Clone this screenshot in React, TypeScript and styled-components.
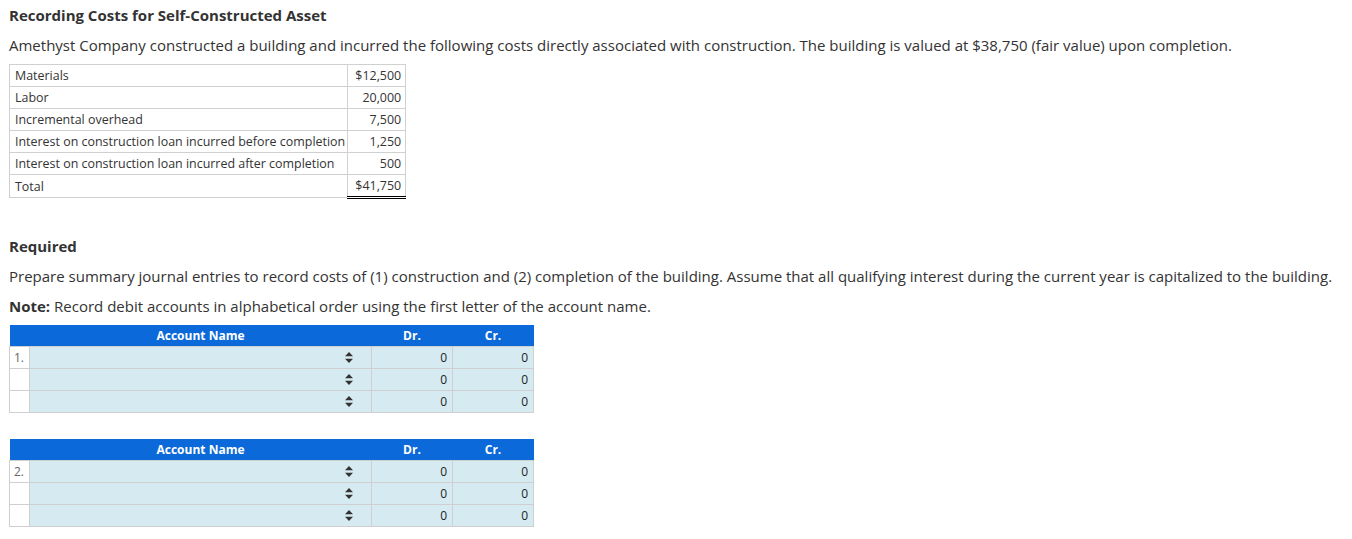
import React from "react";
import styled, { createGlobalStyle } from "styled-components";

const Global = createGlobalStyle`
  html, body { margin: 0; padding: 0; background: #fff; }
  body { font-family: "Open Sans", "Noto Sans", Arial, sans-serif; color: #333; }
`;

const Page = styled.div`
  padding: 5px 9px 0 9px;
`;

const Title = styled.h1`
  margin: 0;
  font-size: 15px;
  line-height: 20px;
  font-weight: 700;
  color: #333;
`;

const Para = styled.p<{ $top?: number }>`
  margin: ${(p) => p.$top ?? 10}px 0 0 0;
  font-size: 15px;
  line-height: 20px;
  color: #333;
`;

const Heading = styled.h2`
  margin: 37px 0 0 0;
  font-size: 15px;
  line-height: 20px;
  font-weight: 700;
  color: #333;
`;

const CostTable = styled.table`
  margin-top: 9px;
  border-collapse: collapse;
  font-size: 12.45px;
  color: #333;
`;

const CostLabel = styled.td`
  border: 1px solid #d0d0d0;
  padding: 0 2px 0 5px;
  height: 21px;
  white-space: nowrap;
`;

const CostValue = styled.td<{ $total?: boolean }>`
  border: 1px solid #d0d0d0;
  padding: 0 4px 0 4px;
  height: 21px;
  text-align: right;
  width: 49px;
  ${(p) =>
    p.$total &&
    `border-top: 1px solid #000; border-bottom: 3px double #000;`}
`;

const Strong = styled.strong`
  font-weight: 700;
`;

const Journal = styled.table<{ $top: number }>`
  margin-top: ${(p) => p.$top}px;
  border-collapse: collapse;
  font-size: 12px;
  width: 525px;
  table-layout: fixed;
`;

const HeadCell = styled.th<{ $w?: number }>`
  background: #0b69d9;
  color: #fff;
  font-weight: 700;
  font-size: 12px;
  height: 21px;
  padding: 0;
  text-align: center;
  ${(p) => (p.$w ? `width: ${p.$w}px;` : "")}
`;

const NumCell = styled.td`
  border: 1px solid #cfcfcf;
  background: #fff;
  color: #666;
  height: 21px;
  padding: 0 0 0 4px;
  font-size: 12px;
`;

const AcctCell = styled.td`
  border: 1px solid #cfcfcf;
  background: #d5eaf1;
  height: 21px;
  padding: 0 18px 0 6px;
`;

const AcctInner = styled.div`
  display: flex;
  justify-content: flex-end;
  align-items: center;
`;

const AmtCell = styled.td`
  border: 1px solid #cfcfcf;
  background: #d5eaf1;
  height: 21px;
  padding: 0 5px;
  text-align: right;
  color: #222;
`;

const Warn = styled.p`
  margin: 8px 0 0 0;
  font-size: 15px;
  line-height: 20px;
  color: #e0302a;
`;

const SortIcon = () => (
  <svg width="8" height="11" viewBox="0 0 8 11">
    <path d="M4 0 L8 4.3 L0 4.3 Z" fill="#333" />
    <path d="M4 11 L8 6.7 L0 6.7 Z" fill="#333" />
  </svg>
);

const costs: [string, string][] = [
  ["Materials", "$12,500"],
  ["Labor", "20,000"],
  ["Incremental overhead", "7,500"],
  ["Interest on construction loan incurred before completion", "1,250"],
  ["Interest on construction loan incurred after completion", "500"],
];

const JournalTable = ({ num, top }: { num: string; top: number }) => (
  <Journal $top={top}>
    <thead>
      <tr>
        <HeadCell $w={20} />
        <HeadCell $w={342}>Account Name</HeadCell>
        <HeadCell $w={81}>Dr.</HeadCell>
        <HeadCell>Cr.</HeadCell>
      </tr>
    </thead>
    <tbody>
      {[0, 1, 2].map((i) => (
        <tr key={i}>
          <NumCell>{i === 0 ? num : ""}</NumCell>
          <AcctCell>
            <AcctInner>
              <SortIcon />
            </AcctInner>
          </AcctCell>
          <AmtCell>0</AmtCell>
          <AmtCell>0</AmtCell>
        </tr>
      ))}
    </tbody>
  </Journal>
);

export default function App() {
  return (
    <Page>
      <Global />
      <Title>Recording Costs for Self-Constructed Asset</Title>
      <Para $top={10}>
        Amethyst Company constructed a building and incurred the following costs directly associated with
        construction. The building is valued at $38,750 (fair value) upon completion.
      </Para>
      <CostTable>
        <tbody>
          {costs.map(([l, v]) => (
            <tr key={l}>
              <CostLabel>{l}</CostLabel>
              <CostValue>{v}</CostValue>
            </tr>
          ))}
          <tr>
            <CostLabel>Total</CostLabel>
            <CostValue $total>$41,750</CostValue>
          </tr>
        </tbody>
      </CostTable>
      <Heading>Required</Heading>
      <Para $top={10}>
        Prepare summary journal entries to record costs of (1) construction and (2) completion of the building.
        Assume that all qualifying interest during the current year is capitalized to the building.
      </Para>
      <Para $top={10}>
        <Strong>Note:</Strong> Record debit accounts in alphabetical order using the first letter of the account
        name.
      </Para>
      <JournalTable num="1." top={9} />
      <JournalTable num="2." top={26} />
      <Warn>Please answer all parts of the question.</Warn>
    </Page>
  );
}
